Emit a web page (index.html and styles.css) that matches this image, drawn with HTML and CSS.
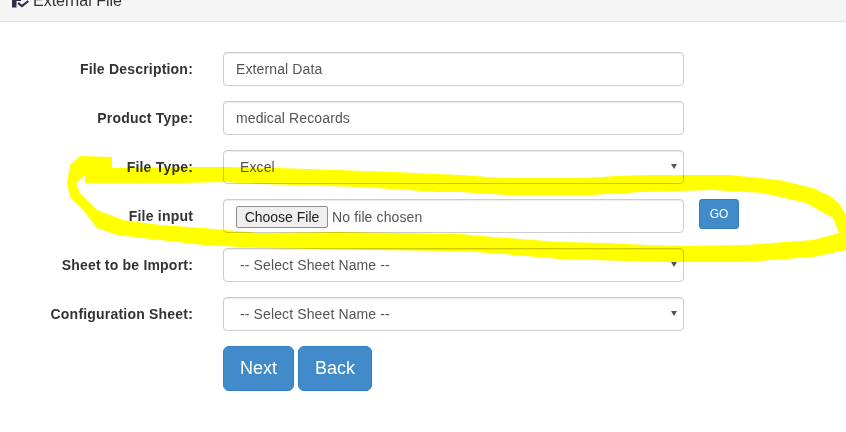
FILE: index.html
```html
<!DOCTYPE html>
<html lang="en">
<head>
<meta charset="utf-8">
<title>External File</title>
<link rel="stylesheet" href="styles.css">
</head>
<body>
<header class="panel-heading">
  <svg class="tasks-icon" viewBox="0 0 17 8" width="17" height="8" aria-hidden="true">
    <path d="M0 0H4.500V7.500H0Z M4.500 0H9V1H4.500Z" fill="#2f2f4a"/>
    <path d="M6 3L10 6.200L16.300 1" fill="none" stroke="#2f2f4a" stroke-width="2.200"/>
  </svg>
  <span>External File</span>
</header>
<form class="form">
  <label class="label" for="d">File Description:</label>
  <div class="field"><input id="d" class="control" type="text" value="External Data"></div>
  <label class="label" for="p">Product Type:</label>
  <div class="field"><input id="p" class="control" type="text" value="medical Recoards"></div>
  <label class="label" for="t">File Type:</label>
  <div class="field field-select"><select id="t" class="control"><option>Excel</option></select></div>
  <label class="label" for="f">File input</label>
  <div class="field"><input id="f" class="control" type="file"><button type="button" class="btn btn-go">GO</button></div>
  <label class="label" for="s">Sheet to be Import:</label>
  <div class="field field-select"><select id="s" class="control"><option>-- Select Sheet Name --</option></select></div>
  <label class="label" for="c">Configuration Sheet:</label>
  <div class="field field-select"><select id="c" class="control"><option>-- Select Sheet Name --</option></select></div>
  <div class="actions">
    <button type="button" class="btn btn-lg">Next</button>
    <button type="button" class="btn btn-lg">Back</button>
  </div>
</form>
<svg class="scribble" viewBox="0 0 846 432" width="846" height="432" aria-hidden="true">
  <path fill="#ffff00" fill-rule="evenodd" d="M80 156 L112 157 L112 168 L193 167 L227 167 L277 168 L337 170 L393 172 L460 175 L503 178 L583 178 L617 176 L646 175 L729 175 L779 180 L813 188 L830 196 L839 203 L846 215 L846 250 L813 257 L746 262 L689 262 L660 262 L627 261 L560 259 L503 254 L460 251 L447 251 L370 250 L260 248 L203 245 L160 240 L117 235 L97 228 L83 210 L70 197 L67 183 L70 165 Z M85 175 L76 183 L80 193 L97 210 L123 220 L160 225 L203 228 L260 233 L337 232 L460 234 L493 237 L560 242 L607 243 L646 245 L683 246 L746 245 L813 240 L839 233 L833 218 L806 203 L763 193 L713 190 L643 192 L590 195 L507 195 L460 192 L437 192 L360 187 L260 184 L223 182 L183 183 L85 183 Z"/>
</svg>
</body>
</html>
```
FILE: styles.css
```css
* { box-sizing: border-box; }
html, body { margin: 0; height: 432px; overflow: hidden; background: #fff; }
body {
  position: relative;
  font-family: "Liberation Sans", Arial, sans-serif;
  font-size: 14px;
  line-height: 20px;
  color: #333;
}
.panel-heading {
  height: 22px;
  background: #f5f5f5;
  border-bottom: 1px solid #ddd;
  padding-left: 12px;
  display: flex;
  align-items: flex-end;
  gap: 4px;
  overflow: hidden;
  font-size: 16px;
  line-height: 18px;
  padding-bottom: 11px;
}
.panel-heading span { flex: none; height: 18px; }
.tasks-icon { flex: none; margin-bottom: 2px; }
.form {
  display: grid;
  grid-template-columns: 193px 461px;
  column-gap: 30px;
  row-gap: 15px;
  padding-top: 30px;
  align-items: center;
}
.label {
  text-align: right;
  font-weight: 700;
  letter-spacing: 0.2px;
}
.field { display: flex; align-items: flex-start; height: 34px; position: relative; }
.field-select::after {
  content: "";
  position: absolute;
  right: 7px;
  top: 14px;
  border-style: solid;
  border-width: 5px 3px 0;
  border-color: #555 transparent transparent;
  pointer-events: none;
}
.control {
  display: block;
  width: 461px;
  height: 34px;
  flex: none;
  padding: 6px 12px;
  font: 14px/20px "Liberation Sans", Arial, sans-serif;
  letter-spacing: 0.12px;
  color: #555;
  background: #fff;
  border: 1px solid #ccc;
  border-radius: 4px;
  box-shadow: inset 0 1px 1px rgba(0,0,0,.075);
}
select.control {
  appearance: none;
  padding-left: 16px;
}
.control::file-selector-button {
  width: 92px;
  height: 22px;
  margin-right: 4px;
  padding: 0;
  font: 14px "Liberation Sans", Arial, sans-serif;
  color: #222;
  background: #efefef;
  border: 1px solid #8f8f8f;
  border-radius: 2px;
}
.btn {
  font-family: "Liberation Sans", Arial, sans-serif;
  color: #fff;
  background: #428bca;
  border: 1px solid #357ebd;
  border-radius: 4px;
}
.btn-go {
  flex: none;
  width: 40px;
  height: 30px;
  margin-left: 15px;
  padding: 0;
  font-size: 12px;
  border-radius: 3px;
}
.actions {
  grid-column: 2;
  display: flex;
  gap: 4px;
}
.btn-lg {
  height: 45px;
  padding: 10px 16px;
  font-size: 18px;
  line-height: 23px;
  border-radius: 6px;
}
.scribble {
  position: absolute;
  left: 0;
  top: 0;
  mix-blend-mode: multiply;
  pointer-events: none;
}
```
